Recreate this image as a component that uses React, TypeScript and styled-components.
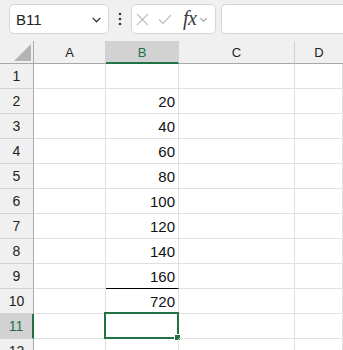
import React from 'react';
import styled, { createGlobalStyle } from 'styled-components';

const GREEN = '#217346';

const GlobalStyle = createGlobalStyle`
    html, body {
        margin: 0;
        padding: 0;
        background: #ffffff;
    }
    body {
        font-family: 'Liberation Sans', Arial, sans-serif;
    }
`;

const Page = styled.div`
    width: 343px;
    height: 350px;
    overflow: hidden;
    background: #ffffff;
`;

const Toolbar = styled.div`
    display: flex;
    align-items: flex-start;
    height: 41px;
    padding: 4px 0 0 9px;
    box-sizing: border-box;
    background: #f0f0f0;
`;

const Box = styled.div<{ $width?: number; $open?: boolean }>`
    display: flex;
    align-items: center;
    box-sizing: border-box;
    height: 30px;
    width: ${(p) => (p.$width ? `${p.$width}px` : 'auto')};
    flex: ${(p) => (p.$width ? 'none' : '1')};
    background: #ffffff;
    border: 1px solid #d6d6d6;
    border-right: ${(p) => (p.$open ? 'none' : '1px solid #d6d6d6')};
    border-radius: ${(p) => (p.$open ? '5px 0 0 5px' : '5px')};
`;

const NameText = styled.span`
    flex: 1;
    padding-left: 6px;
    font-size: 15px;
    color: #222;
`;

const Dots = styled.div`
    width: 22px;
    height: 30px;
    display: flex;
    align-items: center;
    justify-content: center;
`;

const Gap = styled.div`
    width: 5px;
`;

const IconSlot = styled.span<{ $left: number }>`
    display: flex;
    margin-left: ${(p) => p.$left}px;
`;

const FxText = styled.span`
    font-family: 'Liberation Serif', 'Times New Roman', serif;
    font-style: italic;
    font-size: 20px;
    line-height: 20px;
    color: #3a3a3a;
    margin-left: 11px;
    margin-top: -2px;
    letter-spacing: -0.5px;
`;

const Sheet = styled.div`
    display: grid;
    grid-template-columns: 34px 72px 73px 116px 1fr;
    grid-auto-rows: 25px;
    grid-template-rows: 23px;
    background: #ffffff;
`;

const Corner = styled.div`
    background: #f0f0f0;
    border-right: 1px solid #a8a8a8;
    border-bottom: 1px solid #a8a8a8;
    box-sizing: border-box;
    display: flex;
    align-items: flex-end;
    justify-content: flex-end;
    padding: 0 2px 2px 0;
`;

const ColHead = styled.div<{ $active?: boolean; $last?: boolean }>`
    box-sizing: border-box;
    display: flex;
    align-items: center;
    justify-content: center;
    font-size: 13px;
    color: ${(p) => (p.$active ? GREEN : '#222')};
    background: ${(p) => (p.$active ? '#d2d2d2' : '#f0f0f0')};
    border-right: ${(p) => (p.$last ? 'none' : '1px solid #d0d0d0')};
    border-bottom: ${(p) => (p.$active ? `2px solid ${GREEN}` : '1px solid #a8a8a8')};
    padding-top: ${(p) => (p.$active ? '1px' : '0')};
`;

const RowHead = styled.div<{ $active?: boolean }>`
    box-sizing: border-box;
    display: flex;
    align-items: center;
    justify-content: center;
    font-size: 14px;
    color: ${(p) => (p.$active ? GREEN : '#222')};
    background: ${(p) => (p.$active ? '#d2d2d2' : '#f0f0f0')};
    border-right: ${(p) => (p.$active ? `2px solid ${GREEN}` : '1px solid #a8a8a8')};
    border-bottom: 1px solid #d4d4d4;
`;

const Cell = styled.div<{ $strongBottom?: boolean }>`
    position: relative;
    box-sizing: border-box;
    display: flex;
    align-items: center;
    justify-content: flex-end;
    padding-right: 3px;
    font-size: 15px;
    color: #111;
    border-right: 1px solid #e0e0e0;
    border-bottom: ${(p) => (p.$strongBottom ? '1px solid #000' : '1px solid #e0e0e0')};
`;

const Selection = styled.div`
    position: absolute;
    left: -2px;
    top: -2px;
    right: -1px;
    bottom: -1px;
    border: 2px solid ${GREEN};
    pointer-events: none;
`;

const Handle = styled.div`
    position: absolute;
    right: -4px;
    bottom: -4px;
    width: 5px;
    height: 5px;
    background: ${GREEN};
    border: 1px solid #ffffff;
`;

const Chevron: React.FC<{ size?: number; color?: string }> = ({ size = 10, color = '#444' }) => (
    <svg width={size} height={size} viewBox="0 0 10 10">
        <path d="M1.5 3.5 L5 7 L8.5 3.5" fill="none" stroke={color} strokeWidth="1.2" />
    </svg>
);

const values: Record<number, string> = {
    2: '20',
    3: '40',
    4: '60',
    5: '80',
    6: '100',
    7: '120',
    8: '140',
    9: '160',
    10: '720',
};

const rows = Array.from({ length: 12 }, (_, i) => i + 1);

const App: React.FC = () => {
    return (
        <Page>
            <GlobalStyle />
            <Toolbar>
                <Box $width={100}>
                    <NameText>B11</NameText>
                    <IconSlot $left={0} style={{ marginRight: 6 }}>
                        <Chevron size={11} color="#333" />
                    </IconSlot>
                </Box>
                <Dots>
                    <svg width="4" height="14" viewBox="0 0 4 14">
                        <circle cx="2" cy="2" r="1.3" fill="#333" />
                        <circle cx="2" cy="7" r="1.3" fill="#333" />
                        <circle cx="2" cy="12" r="1.3" fill="#333" />
                    </svg>
                </Dots>
                <Box $width={85}>
                    <IconSlot $left={4}>
                        <svg width="13" height="13" viewBox="0 0 13 13">
                            <path d="M1 1 L12 12 M12 1 L1 12" stroke="#bdbdbd" strokeWidth="1.1" fill="none" />
                        </svg>
                    </IconSlot>
                    <IconSlot $left={9}>
                        <svg width="14" height="13" viewBox="0 0 14 13">
                            <path d="M1 6.5 L5 10.5 L13 2" stroke="#bdbdbd" strokeWidth="1.1" fill="none" />
                        </svg>
                    </IconSlot>
                    <FxText>fx</FxText>
                    <IconSlot $left={3}>
                        <Chevron size={9} color="#999" />
                    </IconSlot>
                </Box>
                <Gap />
                <Box $open />
            </Toolbar>
            <Sheet>
                <Corner>
                    <svg width="17" height="17" viewBox="0 0 17 17">
                        <polygon points="17,0 17,17 0,17" fill="#b4b4b4" />
                    </svg>
                </Corner>
                <ColHead>A</ColHead>
                <ColHead $active>B</ColHead>
                <ColHead>C</ColHead>
                <ColHead $last>D</ColHead>
                {rows.map((r) => (
                    <React.Fragment key={r}>
                        <RowHead $active={r === 11}>{r}</RowHead>
                        <Cell />
                        <Cell $strongBottom={r === 9}>
                            {values[r] ?? ''}
                            {r === 11 && (
                                <Selection>
                                    <Handle />
                                </Selection>
                            )}
                        </Cell>
                        <Cell />
                        <Cell />
                    </React.Fragment>
                ))}
            </Sheet>
        </Page>
    );
};

export default App;
